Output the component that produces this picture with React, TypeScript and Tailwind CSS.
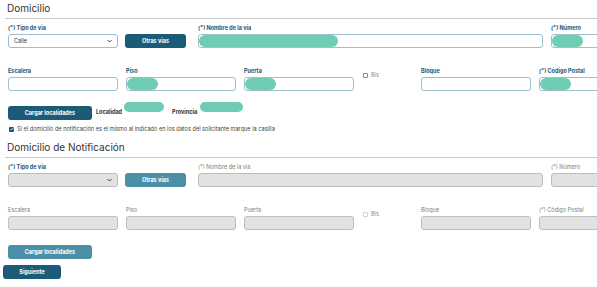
import React from 'react';

const font = { fontFamily: 'Inter, "Open Sans", sans-serif' };

function Label({ text, muted }: { text: string; muted?: boolean }) {
  return (
    <div className={`h-[8px] mb-[2px] text-[5.5px] leading-[8px] whitespace-nowrap ${muted ? 'text-[#7d7d7d]' : 'font-bold text-[#1d5873]'}`}>
      {text}
    </div>
  );
}

function Field({ w, blob, disabled }: { w: string; blob?: string; disabled?: boolean }) {
  return (
    <div className={`${w} h-[14px] rounded-[3px] border flex items-center overflow-hidden shrink-0 ${disabled ? 'bg-[#e2e2e2] border-[#bdbdbd]' : 'bg-white border-[#9cc0cf]'}`}>
      {blob && <div className={`${blob} h-full rounded-full bg-[#6fcdb3]`} />}
    </div>
  );
}

function Select({ value, disabled }: { value?: string; disabled?: boolean }) {
  return (
    <div className={`w-[110px] h-[14px] rounded-[3px] border flex items-center justify-between px-[5px] shrink-0 ${disabled ? 'bg-[#e2e2e2] border-[#bdbdbd]' : 'bg-white border-[#9cc0cf]'}`}>
      <span className="text-[5.5px] text-[#333]">{value}</span>
      <svg width="5" height="4" viewBox="0 0 5 4"><path d="M0.5 1 L2.5 3 L4.5 1" stroke="#444" strokeWidth="1" fill="none" /></svg>
    </div>
  );
}

function Button({ text, w, light }: { text: string; w: string; light?: boolean }) {
  return (
    <div className={`${w} h-[14px] rounded-[3px] flex items-center justify-center text-white font-bold text-[5.5px] shrink-0 ${light ? 'bg-[#4b8fa9]' : 'bg-[#1b5b78]'}`}>
      {text}
    </div>
  );
}

function Section({ title, disabled }: { title: string; disabled?: boolean }) {
  const blob = (c: string) => (disabled ? undefined : c);
  return (
    <div>
      <div className="pl-[7px] text-[10px] leading-[12px] text-[#333]">{title}</div>
      <div className="ml-[5px] mt-[4px] border-t border-[#c8c8c8]" />
      <div className="flex items-end pl-[8px] mt-[5px]">
        <div className="shrink-0">
          <Label text="(*) Tipo de vía" />
          <Select value={disabled ? '' : 'Calle'} disabled={disabled} />
        </div>
        <div className="ml-[7px] shrink-0">
          <Button text="Otras vías" w="w-[61px]" light={disabled} />
        </div>
        <div className="ml-[12px] shrink-0">
          <Label text="(*) Nombre de la vía" muted={disabled} />
          <Field w="w-[345px]" blob={blob('w-[139px]')} disabled={disabled} />
        </div>
        <div className="ml-[8px] shrink-0">
          <Label text="(*) Número" muted={disabled} />
          <Field w="w-[110px]" blob={blob('w-[31px]')} disabled={disabled} />
        </div>
      </div>
      <div className="flex items-end pl-[8px] mt-[19px]">
        <div className="shrink-0">
          <Label text="Escalera" muted={disabled} />
          <Field w="w-[110px]" disabled={disabled} />
        </div>
        <div className="ml-[8px] shrink-0">
          <Label text="Piso" muted={disabled} />
          <Field w="w-[110px]" blob={blob('w-[31px]')} disabled={disabled} />
        </div>
        <div className="ml-[8px] shrink-0">
          <Label text="Puerta" muted={disabled} />
          <Field w="w-[110px]" blob={blob('w-[31px]')} disabled={disabled} />
        </div>
        <div className="ml-[9px] w-[50px] shrink-0 self-start pt-[4px] flex items-center gap-[3px]">
          <div className={`w-[5px] h-[5px] border rounded-[1px] ${disabled ? 'border-[#d0d0d0]' : 'border-[#888]'}`} />
          <span className="text-[5.5px] text-[#888]">Bis</span>
        </div>
        <div className="ml-[8px] shrink-0">
          <Label text="Bloque" muted={disabled} />
          <Field w="w-[110px]" disabled={disabled} />
        </div>
        <div className="ml-[8px] shrink-0">
          <Label text="(*) Código Postal" muted={disabled} />
          <Field w="w-[110px]" blob={blob('w-[31px]')} disabled={disabled} />
        </div>
      </div>
    </div>
  );
}

export default function App() {
  return (
    <div className="w-[597px] h-[287px] bg-white overflow-hidden relative" style={font}>
      <div className="pt-[2px]">
        <Section title="Domicilio" />
        <div className="flex items-start pl-[8px] mt-[15px]">
          <Button text="Cargar localidades" w="w-[84px]" />
          <span className="ml-[4px] mt-[2px] text-[5.5px] font-bold text-[#333]">Localidad</span>
          <div className="ml-[2px] -mt-[4px] w-[40px] h-[10px] rounded-full bg-[#6fcdb3]" />
          <span className="ml-[8px] mt-[2px] text-[5.5px] font-bold text-[#333]">Provincia</span>
          <div className="ml-[3px] -mt-[4px] w-[43px] h-[10px] rounded-full bg-[#6fcdb3]" />
        </div>
        <div className="flex items-center pl-[9px] mt-[5px] gap-[3px]">
          <div className="w-[5px] h-[5px] rounded-[1px] bg-[#1b5b78] flex items-center justify-center">
            <svg width="4" height="4" viewBox="0 0 4 4"><path d="M0.6 2 L1.6 3 L3.4 0.9" stroke="white" strokeWidth="0.8" fill="none" /></svg>
          </div>
          <span className="text-[5.6px] text-[#444]">Si el domicilio de notificación es el mismo al indicado en los datos del solicitante marque la casilla</span>
        </div>
        <div className="mt-[8px]">
          <Section title="Domicilio de Notificación" disabled />
        </div>
        <div className="pl-[8px] mt-[15px]">
          <Button text="Cargar localidades" w="w-[84px]" light />
        </div>
        <div className="pl-[3px] mt-[6px]">
          <Button text="Siguiente" w="w-[58px]" />
        </div>
      </div>
    </div>
  );
}
